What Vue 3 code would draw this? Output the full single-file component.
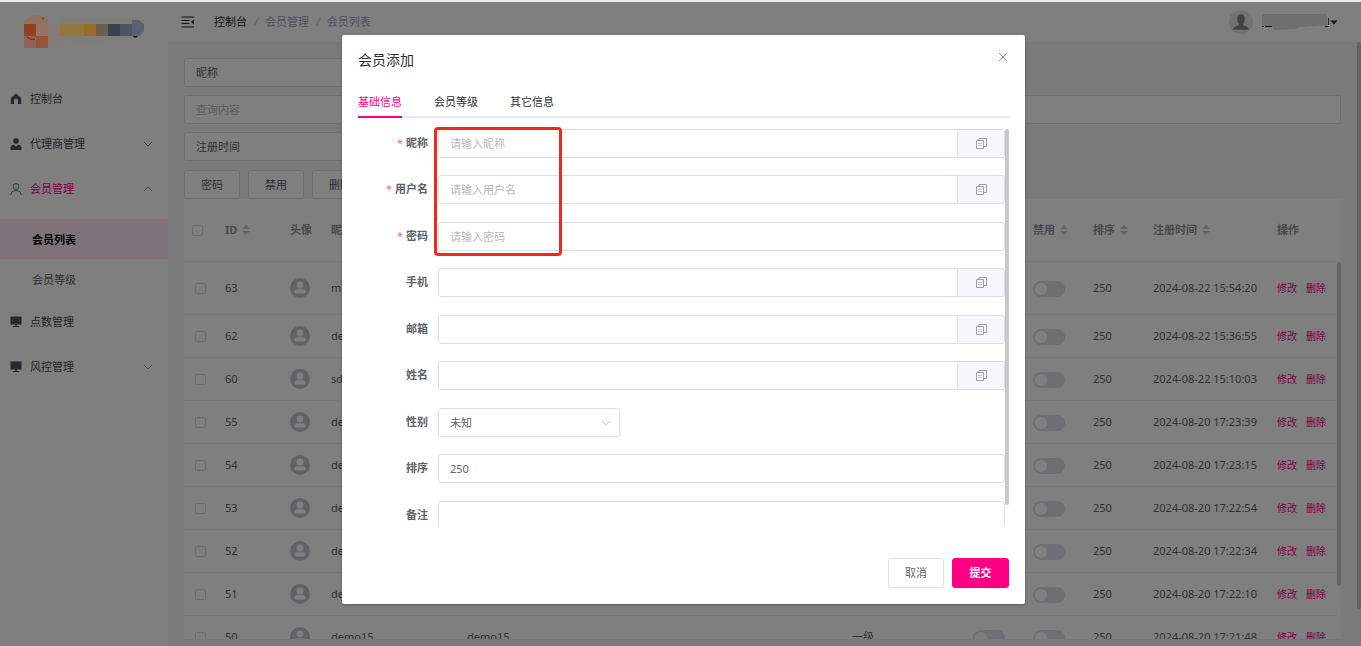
<script setup>
import { ref } from 'vue'

const nickname = ref('昵称')
const content = ref('')
const timeType = ref('注册时间')
const gender = ref('未知')
const tabs = ['基础信息', '会员等级', '其它信息']
const activeTab = ref(0)

const rows = ref([
  { id: 63, name: 'mi', time: '2024-08-22 15:54:20' },
  { id: 62, name: 'demo22', time: '2024-08-22 15:36:55' },
  { id: 60, name: 'sdemo', time: '2024-08-22 15:10:03' },
  { id: 55, name: 'demo20', time: '2024-08-20 17:23:39' },
  { id: 54, name: 'demo19', time: '2024-08-20 17:23:15' },
  { id: 53, name: 'demo18', time: '2024-08-20 17:22:54' },
  { id: 52, name: 'demo17', time: '2024-08-20 17:22:34' },
  { id: 51, name: 'demo16', time: '2024-08-20 17:22:10' },
  { id: 50, name: 'demo15', time: '2024-08-20 17:21:48' },
])

const columns = [
  { key: 'id', label: 'ID', sort: true },
  { key: 'avatar', label: '头像' },
  { key: 'nick', label: '昵称', sort: true },
  { key: 'user', label: '用户名', sort: true },
  { key: 'level', label: '等级' },
  { key: 'risk', label: '风控', sort: true },
  { key: 'ban', label: '禁用', sort: true },
  { key: 'order', label: '排序', sort: true },
  { key: 'time', label: '注册时间', sort: true },
  { key: 'ops', label: '操作' },
]

const fields = [
  { id: 'f-nick', label: '昵称', required: true, placeholder: '请输入昵称', copy: true },
  { id: 'f-user', label: '用户名', required: true, placeholder: '请输入用户名', copy: true },
  { id: 'f-pass', label: '密码', required: true, placeholder: '请输入密码' },
  { id: 'f-phone', label: '手机', copy: true },
  { id: 'f-mail', label: '邮箱', copy: true },
  { id: 'f-name', label: '姓名', copy: true },
  { id: 'f-gender', label: '性别', type: 'select' },
  { id: 'f-order', label: '排序', value: '250' },
  { id: 'f-note', label: '备注', type: 'textarea' },
]
</script>

<template>
  <div class="page">
    <aside class="side">
      <nav class="menu">
        <a class="item" href="#">
          <svg class="ico" viewBox="0 0 12 12"><path d="M6 0.5 L0.8 5 V11 H4 V7.5 A2 2 0 0 1 8 7.5 V11 H11.2 V5 Z" fill="#505256" /></svg>
          <span>控制台</span>
        </a>
        <a class="item" href="#">
          <svg class="ico" viewBox="0 0 12 12"><circle cx="6" cy="3" r="2.8" fill="#505256" /><path d="M0.5 12 V9.5 Q0.5 7 4 6.5 L6 8.5 L8 6.5 Q11.5 7 11.5 9.5 V12 Z" fill="#505256" /></svg>
          <span>代理商管理</span>
          <svg class="chev" viewBox="0 0 10 6"><path d="M1 1 L5 5 L9 1" /></svg>
        </a>
        <a class="item open" href="#">
          <svg class="ico" viewBox="0 0 12 12"><circle cx="6" cy="3.5" r="2.9" fill="none" stroke="#707276" /><path d="M0.8 12 Q1 7.6 6 7.6 Q11 7.6 11.2 12" fill="none" stroke="#707276" /></svg>
          <span>会员管理</span>
          <svg class="chev" viewBox="0 0 10 6"><path d="M1 5 L5 1 L9 5" /></svg>
        </a>
        <div class="sub">
          <a class="subitem on" href="#">会员列表</a>
          <a class="subitem" href="#">会员等级</a>
        </div>
        <a class="item" href="#">
          <svg class="ico" viewBox="0 0 12 12"><path d="M0.5 0.5 H11.5 V8.5 H0.5 Z M5.3 8.5 H6.7 V10 H5.3 Z M3 10 H9 V11 H3 Z" fill="#505256" /></svg>
          <span>点数管理</span>
        </a>
        <a class="item" href="#">
          <svg class="ico" viewBox="0 0 12 12"><path d="M0.5 0.5 H11.5 V8.5 H0.5 Z M5.3 8.5 H6.7 V10 H5.3 Z M3 10 H9 V11 H3 Z" fill="#505256" /></svg>
          <span>风控管理</span>
          <svg class="chev" viewBox="0 0 10 6"><path d="M1 1 L5 5 L9 1" /></svg>
        </a>
      </nav>
    </aside>

    <div class="right">
      <header class="top">
        <button class="fold" type="button" aria-label="折叠菜单">
          <svg viewBox="0 0 14 12"><path d="M0.5 1 H13 M0.5 4.5 H8.5 M0.5 7.5 H8.5 M0.5 11 H13" stroke="#222" stroke-width="1.2" fill="none" /><path d="M12.8 3.6 V8.4 L10 6 Z" fill="#222" /></svg>
        </button>
        <nav class="crumbs">
          <a class="first" href="#">控制台</a><i>/</i><a href="#">会员管理</a><i>/</i><a href="#">会员列表</a>
        </nav>
        <div class="user">
          <svg class="face" viewBox="0 0 24 24"><circle cx="12" cy="12" r="12" fill="#e4e4e4" /><path d="M12 4.5 C9.3 4.5 8 6.4 8.2 9 C8.3 11 9 12.7 10 13.7 V15.2 C7 16 4.5 16.8 4.2 19.8 H19.8 C19.5 16.8 17 16 14 15.2 V13.7 C15 12.7 15.7 11 15.8 9 C16 6.4 14.7 4.5 12 4.5 Z" fill="#85827f" /></svg>
          <svg class="masked" viewBox="0 0 68 18"><path d="M0 1 H65 V12 L38 14 L34 16 L12 17 L10 13 H0 Z" fill="#dcdedc" /><path d="M0 13.5 H2 M3 13.5 H10 M63 13.5 H67" stroke="#222" /><path d="M66.5 5 V12" stroke="#38537a" /></svg>
          <svg class="caret" viewBox="0 0 8 5"><path d="M0.5 0.5 H7.5 L4 4.5 Z" fill="#222" /></svg>
        </div>
      </header>

      <main class="main">
        <div class="filters">
          <input v-model="nickname" class="box short" aria-label="查询字段" />
          <input v-model="content" class="box" aria-label="查询内容" placeholder="查询内容" />
          <input v-model="timeType" class="box short" aria-label="时间类型" />
        </div>
        <div class="actions">
          <button class="btn" type="button">密码</button>
          <button class="btn" type="button">禁用</button>
          <button class="btn" type="button">删除</button>
        </div>
        <section class="list">
          <table class="grid head">
            <colgroup>
              <col class="c-check" /><col v-for="c in columns" :key="c.key" :class="'c-' + c.key" />
            </colgroup>
            <thead>
              <tr>
                <th><input class="check" type="checkbox" aria-label="全选" /></th>
                <th v-for="c in columns" :key="c.key">
                  {{ c.label }}<svg v-if="c.sort" class="sort" viewBox="0 0 8 10"><path d="M4 0 L8 4 H0 Z M0 6 H8 L4 10 Z" fill="#c0c4cc" /></svg>
                </th>
              </tr>
            </thead>
          </table>
          <div class="scroll">
            <table class="grid">
              <colgroup>
                <col class="c-check" /><col v-for="c in columns" :key="c.key" :class="'c-' + c.key" />
              </colgroup>
              <tbody>
                <tr v-for="r in rows" :key="r.id">
                  <td class="pick"><input class="check" type="checkbox" :aria-label="'选择 ' + r.id" /></td>
                  <td>{{ r.id }}</td>
                  <td>
                    <svg class="avatar" viewBox="0 0 20 20"><circle cx="10" cy="10" r="10" fill="#c0c4cc" /><circle cx="10" cy="7" r="3.4" fill="#fff" /><path d="M4.3 14 Q4.3 11.2 7.5 11.2 H12.5 Q15.7 11.2 15.7 14 Q15.7 15.6 14 15.6 H6 Q4.3 15.6 4.3 14 Z" fill="#fff" /></svg>
                  </td>
                  <td>{{ r.name }}</td>
                  <td>{{ r.name }}</td>
                  <td>一级</td>
                  <td><input class="switch" type="checkbox" role="switch" :aria-label="'风控 ' + r.id" /></td>
                  <td><input class="switch" type="checkbox" role="switch" :aria-label="'禁用 ' + r.id" /></td>
                  <td>250</td>
                  <td>{{ r.time }}</td>
                  <td class="ops"><a href="#">修改</a><a href="#">删除</a></td>
                </tr>
              </tbody>
            </table>
            <div class="thumb"></div>
          </div>
        </section>
      </main>
      <div class="page-thumb"></div>
    </div>

    <div class="overlay">
      <section class="dialog" role="dialog" aria-modal="true" aria-labelledby="dlg-title">
        <header class="dlg-head">
          <h2 id="dlg-title">会员添加</h2>
          <button class="close" type="button" aria-label="关闭">
            <svg viewBox="0 0 10 10"><path d="M1 1 L9 9 M9 1 L1 9" stroke="#909399" fill="none" /></svg>
          </button>
        </header>
        <div class="tabs" role="tablist">
          <button v-for="(t, i) in tabs" :key="t" type="button" role="tab" class="tab" :class="{ on: i === activeTab }" :aria-selected="i === activeTab" @click="activeTab = i">{{ t }}</button>
        </div>
        <div class="form-wrap">
          <form class="form" @submit.prevent>
            <div v-for="f in fields" :key="f.id" class="row">
              <label :for="f.id"><em v-if="f.required">*</em>{{ f.label }}</label>
              <div v-if="f.type === 'select'" class="pick-one">
                <select :id="f.id" v-model="gender">
                  <option>未知</option>
                  <option>男</option>
                  <option>女</option>
                </select>
                <svg class="down" viewBox="0 0 10 6"><path d="M1 1 L5 5 L9 1" stroke="#c0c4cc" fill="none" /></svg>
              </div>
              <textarea v-else-if="f.type === 'textarea'" :id="f.id" class="box"></textarea>
              <div v-else class="group">
                <input :id="f.id" class="box" :class="{ joined: f.copy }" :placeholder="f.placeholder" :value="f.value" />
                <button v-if="f.copy" class="append" type="button" :aria-label="'复制' + f.label">
                  <svg viewBox="0 0 11 11"><path d="M0.5 2.5 H7.5 V10.5 H0.5 Z M3 2.5 V0.5 H10.5 V8.5 H7.5" stroke="#9da0a8" fill="none" /><path d="M2 5.5 H6 M2 7.5 H6" stroke="#c0c3ca" fill="none" /></svg>
                </button>
              </div>
            </div>
          </form>
          <div class="form-thumb"></div>
          <div class="mark"></div>
        </div>
        <footer class="dlg-foot">
          <button class="btn" type="button">取消</button>
          <button class="btn primary" type="button">提交</button>
        </footer>
      </section>
    </div>

    <svg class="logo" viewBox="0 0 122 34">
      <path d="M0 5 L8 1 L16 0 L24 3 V9 H0 Z" fill="#90705f" />
      <rect x="0" y="9" width="12" height="12" fill="#8e4020" />
      <rect x="12" y="9" width="12" height="12" fill="#957464" />
      <rect x="0" y="21" width="12" height="12" fill="#926354" />
      <rect x="12" y="21" width="12" height="12" fill="#925636" />
      <path d="M18 3 L20 4 M3 22 Q6 25 11 24.5" stroke="#7c2013" fill="none" />
      <rect x="24" y="9" width="12" height="24" fill="#857b76" />
      <path d="M36 3 H112 L120 8 V12 H36 Z" fill="#807c76" />
      <rect x="36" y="9" width="24" height="12" fill="#937640" />
      <rect x="60" y="9" width="12" height="12" fill="#966d22" />
      <rect x="72" y="9" width="12" height="12" fill="#686050" />
      <rect x="84" y="9" width="12" height="12" fill="#3a4052" />
      <path d="M96 9 H108 V21 H96 Z" fill="#4e5365" />
      <path d="M108 5 L114 5 L120 9 V16 L115 21 H108 Z" fill="#5c6070" />
      <path d="M36 21 H108 V27 H84 L48 29 L36 33 Z" fill="#807e7a" />
      <path d="M109 21 H114 L112 23 L109 22 Z" fill="#171a2c" />
    </svg>
    <div class="strip"></div>
  </div>
</template>

<style>
html,
body {
  height: 100%;
  overflow: hidden;
}
</style>

<style scoped>
.page,
.page * {
  box-sizing: border-box;
}
.page {
  position: relative;
  display: flex;
  height: 100vh;
  padding-top: 2px;
  overflow: hidden;
  background: #f4f4f5;
  color: #606266;
  font: 11px/16px "Noto Sans", "Noto Sans CJK SC", sans-serif;
}
a {
  color: inherit;
  text-decoration: none;
}
button,
input,
select,
textarea {
  margin: 0;
  font: inherit;
  color: inherit;
}
svg {
  display: block;
  flex: none;
}
.strip {
  position: absolute;
  top: 0;
  left: 0;
  right: 0;
  height: 2px;
  background: #e9ebec;
}
.logo {
  position: absolute;
  left: 24px;
  top: 15px;
  width: 122px;
  height: 34px;
}

.side {
  flex: none;
  width: 168px;
  padding-top: 74px;
  background: #fff;
}
.item {
  display: flex;
  align-items: center;
  height: 45px;
  padding: 0 15px 0 10px;
  color: #484a4e;
}
.item.open span {
  color: #ff0084;
}
.ico {
  width: 12px;
  height: 12px;
  margin-right: 8px;
}
.chev {
  width: 10px;
  height: 6px;
  margin-left: auto;
}
.chev path {
  fill: none;
  stroke: #909399;
}
.sub {
  padding-top: 8px;
}
.subitem {
  display: flex;
  align-items: center;
  height: 40px;
  padding: 2px 0 0 32px;
}
.subitem.on {
  background: #ffe6f3;
  color: #000;
  font-weight: 700;
}

.right {
  position: relative;
  flex: 1;
  min-width: 0;
  display: flex;
  flex-direction: column;
}
.top {
  display: flex;
  align-items: center;
  height: 40px;
  padding: 0 23px 0 13px;
  background: #fff;
}
.fold {
  padding: 0;
  border: 0;
  background: none;
}
.fold svg {
  width: 14px;
  height: 12px;
}
.crumbs {
  display: flex;
  gap: 7px;
  margin-left: 19px;
  color: #97a8be;
}
.crumbs .first {
  color: #222;
}
.crumbs i {
  color: #c0c4cc;
}
.user {
  display: flex;
  align-items: center;
  margin-left: auto;
}
.face {
  width: 24px;
  height: 24px;
}
.masked {
  width: 68px;
  height: 18px;
  margin-left: 9px;
}
.caret {
  width: 8px;
  height: 5px;
}

.main {
  flex: 1;
  min-height: 0;
  display: flex;
  flex-direction: column;
  padding: 16px 20px 6px 16px;
}
.filters {
  display: flex;
  flex-direction: column;
  gap: 8px;
}
.box {
  display: block;
  width: 100%;
  height: 29px;
  padding: 0 11px 1px;
  border: 1px solid #dcdfe6;
  border-radius: 3px;
  outline: 0;
  background: #fff;
}
.box::placeholder {
  color: #b4b8c1;
  opacity: 1;
}
.box.short {
  width: 182px;
}
.actions {
  display: flex;
  gap: 8px;
  margin-top: 9px;
}
.btn {
  width: 56px;
  height: 29px;
  padding: 0;
  border: 1px solid #dcdfe6;
  border-radius: 3px;
  background: #fff;
}
.btn.primary {
  width: 57px;
  border-color: #ff0084;
  background: #ff0084;
  color: #fff;
  font-weight: 700;
}

.list {
  flex: 1;
  min-height: 0;
  display: flex;
  flex-direction: column;
  border-bottom: 1px solid #ebeef5;
  background: #fff;
}
.grid {
  width: 100%;
  border-collapse: separate;
  border-spacing: 0;
  table-layout: fixed;
}
.c-check { width: 33px; }
.c-id { width: 65px; }
.c-avatar { width: 41px; }
.c-nick { width: 136px; }
.c-level { width: 121px; }
.c-risk { width: 60px; }
.c-ban { width: 60px; }
.c-order { width: 60px; }
.c-time { width: 124px; }
.c-ops { width: 68px; }
.head .c-ops { width: 72px; }
th,
td {
  padding: 0 0 0 8px;
  border-bottom: 1px solid #ebeef5;
  text-align: left;
  white-space: nowrap;
}
th {
  height: 63px;
  color: #909399;
  font-weight: 700;
}
td {
  height: 43px;
}
tr:first-child td {
  height: 53px;
}
.pick {
  padding-left: 11px;
}
.sort {
  display: inline-block;
  width: 8px;
  height: 10px;
  margin-left: 5px;
  vertical-align: -1px;
}
.check {
  display: block;
  appearance: none;
  width: 11px;
  height: 11px;
  border: 1px solid #dcdfe6;
  border-radius: 2px;
}
.avatar {
  width: 20px;
  height: 20px;
}
.switch {
  display: block;
  appearance: none;
  width: 32px;
  height: 16px;
  margin-top: 2px;
  padding: 2px;
  border-radius: 8px;
  background: #dcdfe6;
}
.switch::before {
  content: "";
  display: block;
  width: 12px;
  height: 12px;
  border-radius: 50%;
  background: #fff;
}
.ops a {
  margin-right: 9px;
  color: #ff0084;
  font-size: 10px;
}
.scroll {
  position: relative;
  flex: 1;
  min-height: 0;
  padding-right: 4px;
  overflow: hidden;
}
.thumb {
  position: absolute;
  top: 0;
  right: 0;
  width: 4px;
  height: 86%;
  border-radius: 2px;
  background: #c8c8c8;
}
.page-thumb {
  position: absolute;
  top: 40px;
  right: 0;
  width: 4px;
  height: 88%;
  border-radius: 2px;
  background: #c8c8c8;
}

.overlay {
  position: absolute;
  inset: 0;
  display: flex;
  justify-content: center;
  align-items: flex-start;
  padding: 35px 0 0 6px;
  background: rgba(0, 0, 0, 0.5);
}
.dialog {
  width: 683px;
  max-width: 100%;
  padding: 16px;
  border-radius: 2px;
  background: #fff;
  box-shadow: 0 1px 3px rgba(0, 0, 0, 0.3);
}
.dlg-head {
  display: flex;
  justify-content: space-between;
  height: 35px;
}
.dlg-head h2 {
  margin: 0;
  color: #303133;
  font-size: 14px;
  font-weight: 400;
  line-height: 18px;
}
.close {
  display: flex;
  align-items: center;
  justify-content: center;
  width: 12px;
  height: 12px;
  padding: 0;
  border: 0;
  background: none;
}
.close svg {
  width: 10px;
  height: 10px;
}
.tabs {
  display: flex;
  gap: 32px;
  height: 32px;
  border-bottom: 2px solid #e4e7ed;
}
.tab {
  height: 32px;
  padding: 2px 0 0;
  border: 0;
  border-bottom: 2px solid transparent;
  background: none;
  color: #303133;
}
.tab.on {
  border-color: #ff0084;
  color: #ff0084;
}
.form-wrap {
  position: relative;
  height: 397px;
  margin-top: 11px;
}
.form {
  display: flex;
  flex-direction: column;
  gap: 18px;
  height: 100%;
  padding-right: 4px;
  overflow: hidden;
}
.row {
  flex: none;
  display: grid;
  grid-template-columns: 70px 1fr;
  column-gap: 10px;
  height: 29px;
}
.row:nth-child(even) {
  margin-top: -1px;
}
.row label {
  font-weight: 700;
  line-height: 28px;
  text-align: right;
}
.row em {
  margin-right: 3px;
  color: #f56c6c;
  font-style: normal;
  font-weight: 400;
}
.group {
  display: flex;
}
.box.joined {
  flex: 1;
  border-radius: 3px 0 0 3px;
}
.append {
  display: flex;
  align-items: center;
  justify-content: center;
  width: 47px;
  padding: 0;
  border: 1px solid #dcdfe6;
  border-left: 0;
  border-radius: 0 3px 3px 0;
  background: #f5f7fa;
}
.append svg {
  width: 11px;
  height: 11px;
}
textarea.box {
  height: 60px;
  resize: none;
}
.pick-one {
  position: relative;
  width: 182px;
}
.pick-one select {
  width: 100%;
  height: 29px;
  padding: 0 11px;
  border: 1px solid #dcdfe6;
  border-radius: 3px;
  appearance: none;
  background: #fff;
}
.down {
  position: absolute;
  top: 12px;
  right: 9px;
  width: 10px;
  height: 6px;
}
.form-thumb {
  position: absolute;
  top: 0;
  right: 0;
  width: 4px;
  height: 376px;
  border-radius: 2px;
  background: #c8c8c8;
}
.mark {
  position: absolute;
  top: -2px;
  left: 76px;
  width: 128px;
  height: 129px;
  border: 3px solid #f0281e;
  border-radius: 4px;
  pointer-events: none;
}
.dlg-foot {
  display: flex;
  justify-content: flex-end;
  gap: 8px;
  margin-top: 32px;
}
.dlg-foot .btn {
  height: 30px;
}
</style>
